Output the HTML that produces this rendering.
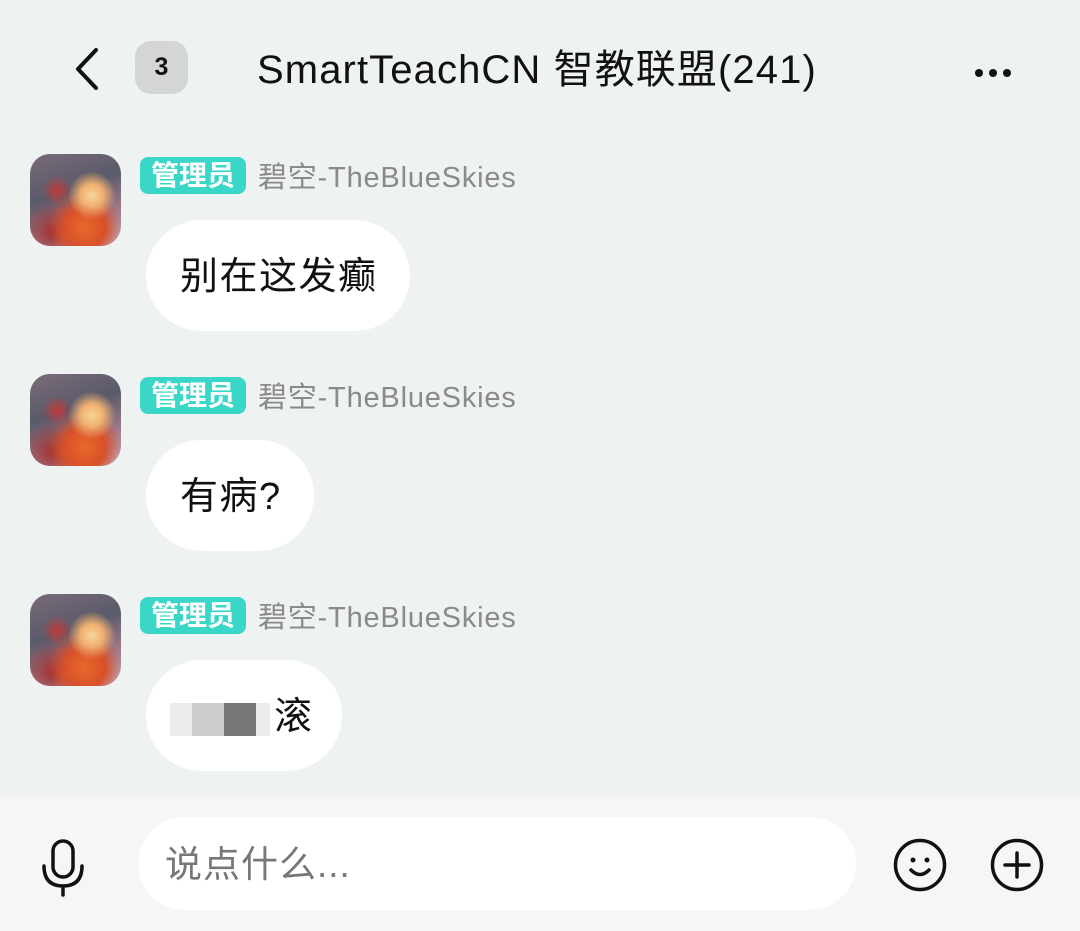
<!DOCTYPE html>
<html><head><meta charset="utf-8"><style>
*{margin:0;padding:0;box-sizing:border-box}
body{width:1080px;height:931px;background:#eef2f0;font-family:"Liberation Sans","Noto Sans CJK SC",sans-serif;position:relative;overflow:hidden}
.abs{position:absolute}
.title{left:257px;top:37px;font-size:40px;color:#111;white-space:nowrap;letter-spacing:1.1px}
.badge3{left:135px;top:41px;width:53px;height:53px;border-radius:16px;background:#d3d6d5;font-size:25px;text-align:center;line-height:53px;color:#111;font-weight:bold}
.dots{left:975px;top:64px}
.dots i{display:inline-block;width:8px;height:8px;border-radius:50%;background:#111;margin-right:6px}
.av{width:91px;height:92px;border-radius:20px;left:30px;overflow:hidden;
background:radial-gradient(circle at 68% 45%,#f6d59a 0,#f0b070 14%,transparent 30%),radial-gradient(circle at 60% 80%,#e86a2a 0,#d8502a 22%,transparent 40%),radial-gradient(circle at 30% 40%,#c23a3a 0,transparent 18%),radial-gradient(circle at 25% 85%,#a03030 0,transparent 30%),linear-gradient(160deg,#7a6b78,#5a5a6a 40%,#a07a8a 70%,#c9b0c0)}
.adm{left:140px;width:106px;height:37px;border-radius:8px;background:#3ad6c8;color:#fff;font-size:28px;line-height:37px;text-align:center;font-weight:bold}
.nm{left:258px;font-size:29px;color:#8a8a8a;white-space:nowrap;letter-spacing:0.8px}
.bub{left:146px;height:111px;border-radius:56px;background:#fff;font-size:38px;line-height:115px;padding:0 32px 0 34px;color:#111;white-space:nowrap;letter-spacing:1.5px}
.bar{left:0;top:796px;width:1080px;height:135px;background:#f5f6f5}
.inp{left:138px;top:817px;width:718px;height:93px;border-radius:47px;background:#fff;font-size:37px;color:#777;line-height:95px;padding-left:27px;letter-spacing:1px}
</style></head><body>
<svg class="abs" style="left:70px;top:46px" width="36" height="46" viewBox="0 0 36 46"><path d="M26 4 L8 23 L26 42" fill="none" stroke="#111" stroke-width="4" stroke-linecap="round" stroke-linejoin="round"/></svg>
<div class="abs badge3">3</div>
<div class="abs title">SmartTeachCN 智教联盟(241)</div>
<div class="abs dots"><i></i><i></i><i></i></div>

<div class="abs av" style="top:154px"></div>
<div class="abs adm" style="top:157px">管理员</div>
<div class="abs nm" style="top:154px">碧空-TheBlueSkies</div>
<div class="abs bub" style="top:220px">别在这发癫</div>

<div class="abs av" style="top:374px"></div>
<div class="abs adm" style="top:377px">管理员</div>
<div class="abs nm" style="top:374px">碧空-TheBlueSkies</div>
<div class="abs bub" style="top:440px">有病?</div>

<div class="abs av" style="top:594px"></div>
<div class="abs adm" style="top:597px">管理员</div>
<div class="abs nm" style="top:594px">碧空-TheBlueSkies</div>
<div class="abs bub" style="top:660px;width:196px;padding:0"><span style="position:absolute;left:128px;top:0">滚</span></div>
<div class="abs" style="left:170px;top:703px;width:100px;height:33px;background:#ececec"></div>
<div class="abs" style="left:192px;top:703px;width:32px;height:33px;background:#cdcdcd"></div>
<div class="abs" style="left:224px;top:703px;width:32px;height:33px;background:#777"></div>

<div class="abs bar"></div>
<div class="abs inp">说点什么...</div>
<svg class="abs" style="left:38px;top:838px" width="50" height="60" viewBox="0 0 50 60"><rect x="15" y="3" width="20" height="36" rx="10" fill="none" stroke="#111" stroke-width="3.5"/><path d="M6 28 Q6 48 25 48 Q44 48 44 28 M25 48 V57" fill="none" stroke="#111" stroke-width="3.5" stroke-linecap="round"/></svg>
<svg class="abs" style="left:892px;top:837px" width="56" height="56" viewBox="0 0 56 56"><circle cx="28" cy="28" r="24.5" fill="none" stroke="#111" stroke-width="3.5"/><circle cx="21" cy="23" r="2.5" fill="#111"/><circle cx="35" cy="23" r="2.5" fill="#111"/><path d="M19 33 Q28 42 37 33" fill="none" stroke="#111" stroke-width="3.5" stroke-linecap="round"/></svg>
<svg class="abs" style="left:989px;top:837px" width="56" height="56" viewBox="0 0 56 56"><circle cx="28" cy="28" r="24.5" fill="none" stroke="#111" stroke-width="3.5"/><path d="M28 16 V40 M16 28 H40" stroke="#111" stroke-width="3.5" stroke-linecap="round"/></svg>
</body></html>
